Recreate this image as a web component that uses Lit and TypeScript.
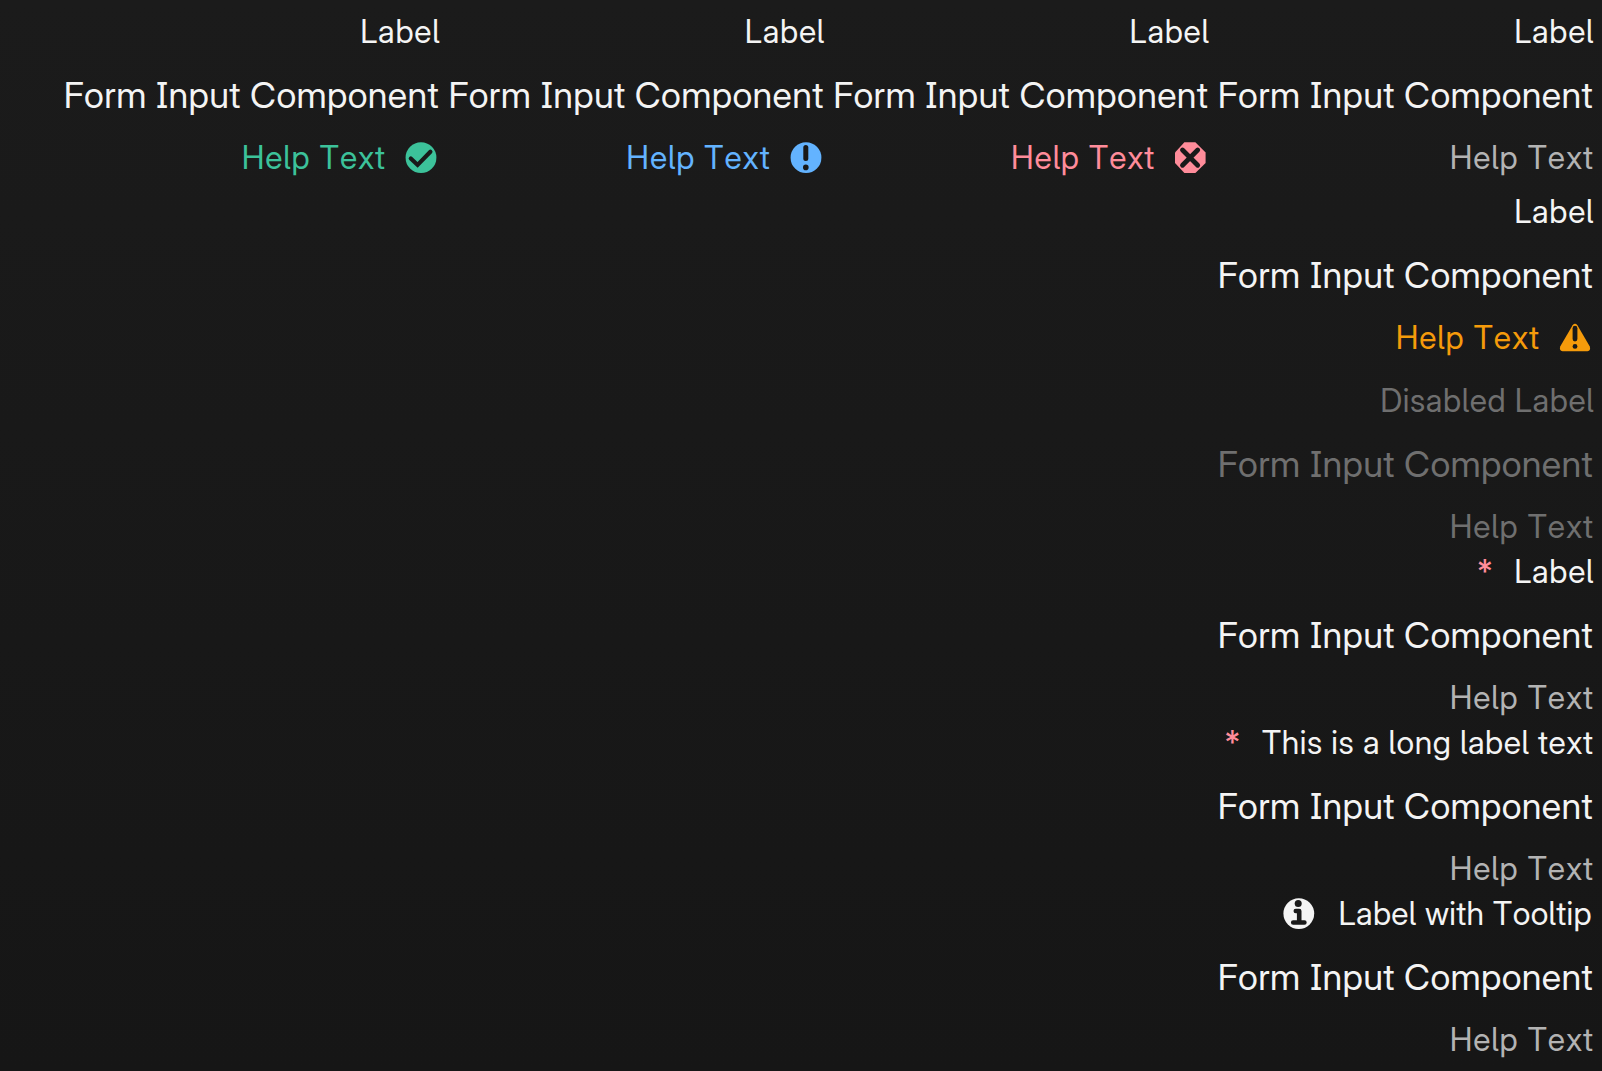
import { LitElement, html, css, svg, nothing } from "lit";
import { customElement, property } from "lit/decorators.js";

const icons: Record<string, unknown> = {
  success: svg`<circle cx="16" cy="15.7" r="15.4" fill="currentColor"/><path class="cut" d="M5.8 16.4L12.6 22.9L25.4 9.8" stroke-width="4.2"/>`,
  info: svg`<circle cx="16" cy="15.7" r="15.4" fill="currentColor"/><path class="cut" d="M15.8 5.4V16.4" stroke-width="5"/><circle class="hole" cx="15.8" cy="25.4" r="2.8"/>`,
  error: svg`<path d="M10.4 .3H21.4L31.6 10.4V21L21.4 31.1H10.4L1 21V10.4Z" fill="currentColor"/><path class="cut" d="M8.5 8L23.7 23.2M23.7 8L8.5 23.2" stroke-width="4.8"/>`,
  warning: svg`<path d="M13.6 3.2Q16 .4 18.4 3.2L30.8 24.6Q32 29 28.5 29.2H3.5Q0 29 1.2 24.6Z" fill="currentColor"/><path class="cut" d="M16 6.2V17" stroke-width="4.8"/><circle class="hole" cx="16" cy="24.4" r="2.4"/>`,
  tooltip: svg`<circle cx="15.8" cy="15.6" r="15.4" fill="currentColor"/><circle class="hole" cx="15.2" cy="5.4" r="3.5"/><path class="cut" d="M12.8 13H16.2V24M10.2 24.5H21.4" stroke-width="4.6" stroke-linejoin="round"/>`,
};

@customElement("status-icon")
class StatusIcon extends LitElement {
  @property() name = "";
  static styles = css`
    :host { display: block; width: 32px; height: 32px; }
    svg { display: block; width: 32px; height: 32px; }
    .cut { fill: none; stroke: #191919; stroke-linecap: round; }
    .hole { fill: #191919; }
  `;
  render() {
    return html`<svg viewBox="0 0 32 32">${icons[this.name]}</svg>`;
  }
}

@customElement("form-item")
class FormItem extends LitElement {
  @property() label = "Label";
  @property() size = "short";
  @property() status = "";
  @property({ type: Boolean }) required = false;
  @property({ type: Boolean }) disabled = false;
  @property({ type: Boolean }) tooltip = false;
  static styles = css`
    :host { display: block; width: 375px; color: #f4f4f4; white-space: nowrap; }
    .row { display: flex; justify-content: flex-end; align-items: center; }
    .label { height: 46px; font-size: 32px; line-height: 46px; }
    .input { height: 81px; font-size: 36px; line-height: 81px; letter-spacing: 0.33px; }
    .help { height: 44px; font-size: 32px; line-height: 44px; color: #b3b3b3; letter-spacing: 0.9px; }
    .caption { margin-right: -0.9px; }
    .mark { color: #ff8c9a; font-weight: 500; margin-right: 21.4px; }
    .tip { margin-right: 23.6px; }
    .state { margin: 0 2px 0 20px; }
    .text.short { letter-spacing: 0.75px; margin-right: -1.2px; }
    .text.medium { letter-spacing: 0.62px; margin-right: -1.2px; }
    .text.long { letter-spacing: 0.58px; margin-right: -0.6px; }
    .text.hinted { letter-spacing: 0.36px; margin-right: 1px; }
    .success { color: #3cc29a; }
    .info { color: #63b3ff; }
    .error { color: #ff8c9a; }
    .warning { color: #f59b0b; }
    .disabled .row { color: #6f6f6f; }
  `;
  render() {
    return html`<div class=${this.disabled ? "disabled" : "enabled"}>
      <div class="row label">
        ${this.required ? html`<span class="mark">*</span>` : nothing}
        ${this.tooltip ? html`<status-icon class="tip" name="tooltip"></status-icon>` : nothing}
        <span class="text ${this.size}">${this.label}</span>
      </div>
      <div class="row input"><span>Form Input Component</span></div>
      <div class="row help ${this.status}">
        <span class="caption">Help Text</span>
        ${this.status ? html`<status-icon class="state" name=${this.status}></status-icon>` : nothing}
      </div>
    </div>`;
  }
}

@customElement("app-root")
class AppRoot extends LitElement {
  static styles = css`
    :host {
      display: block;
      box-sizing: border-box;
      height: 1071px;
      overflow: hidden;
      padding: 9px 9px 0 0;
      background: linear-gradient(#1b1b1b, #161616);
      font-family: "Inter Display", Inter, "Liberation Sans", sans-serif;
      font-feature-settings: "cv05", "cv08";
      font-kerning: none;
    }
    .line { display: flex; justify-content: flex-end; gap: 9.67px; margin-bottom: 9px; }
    .stack { display: flex; flex-direction: column; align-items: flex-end; }
    .spaced { margin-bottom: 18px; }
  `;
  render() {
    return html`
      <div class="line">
        <form-item status="success"></form-item>
        <form-item status="info"></form-item>
        <form-item status="error"></form-item>
        <form-item></form-item>
      </div>
      <div class="stack">
        <form-item class="spaced" status="warning"></form-item>
        <form-item label="Disabled Label" size="medium" disabled></form-item>
        <form-item required></form-item>
        <form-item label="This is a long label text" size="long" required></form-item>
        <form-item label="Label with Tooltip" size="hinted" tooltip></form-item>
      </div>
    `;
  }
}
